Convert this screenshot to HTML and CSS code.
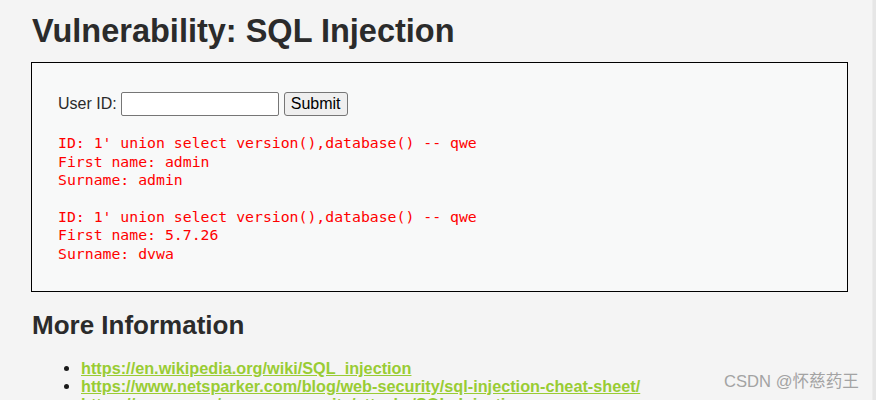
FILE: index.html
```html
<!DOCTYPE html>
<html lang="en">
<head>
<meta charset="utf-8">
<title>Vulnerability: SQL Injection</title>
<link rel="stylesheet" href="styles.css">
</head>
<body>
<div class="page">
  <div class="main">
    <h1 class="title">Vulnerability: SQL Injection</h1>
    <div class="code-area">
      <form class="form-row" onsubmit="return false">
        <label class="label" for="uid">User ID:</label>
        <input class="field" id="uid" type="text" name="id">
        <button class="btn" type="submit">Submit</button>
      </form>
      <pre class="result">ID: 1' union select version(),database() -- qwe
First name: admin
Surname: admin</pre>
      <pre class="result">ID: 1' union select version(),database() -- qwe
First name: 5.7.26
Surname: dvwa</pre>
    </div>
    <h2 class="subtitle">More Information</h2>
    <ul class="links">
      <li><a href="#">https://en.wikipedia.org/wiki/SQL_injection</a></li>
      <li><a href="#">https://www.netsparker.com/blog/web-security/sql-injection-cheat-sheet/</a></li>
      <li><a href="#">https://owasp.org/www-community/attacks/SQL_Injection</a></li>
    </ul>
  </div>
  <div class="scroll-edge"></div>
</div>
<div class="watermark">CSDN @怀慈药王</div>
</body>
</html>
```

FILE: styles.css
```css
html, body {
  margin: 0;
  padding: 0;
  height: 100%;
  overflow: hidden;
}
body {
  background: #f4f4f4;
  font-family: "Liberation Sans", Arial, sans-serif;
  color: #2b2b2b;
}
.page {
  display: flex;
  height: 100%;
}
.main {
  flex: 1;
  padding: 0 24px 0 31px;
}
.scroll-edge {
  width: 3px;
  background: #e6e6e6;
  border-left: 1px solid #ececec;
}
.title {
  margin: 13px 0 12px 1px;
  font-size: 32.5px;
  line-height: 37px;
  font-weight: bold;
  color: #2b2b2b;
}
.code-area {
  border: 1px solid #000;
  background: #f8f9f9;
  padding: 29px 26px 28px 26px;
}
.form-row {
  display: flex;
  align-items: center;
  margin: 0;
  height: 24px;
}
.label {
  font-size: 16px;
  color: #2b2b2b;
  margin-right: 4px;
}
.field {
  box-sizing: border-box;
  width: 158px;
  height: 24px;
  margin: 0;
  border: 1px solid #767676;
  border-radius: 2px;
  background: #fff;
}
.btn {
  box-sizing: border-box;
  width: 64px;
  height: 24px;
  margin: 0 0 0 5px;
  padding: 0;
  border: 1px solid #767676;
  border-radius: 3px;
  background: #efefef;
  font-family: "Liberation Sans", Arial, sans-serif;
  font-size: 16px;
  color: #000;
}
.result {
  margin: 18px 0 0 0;
  font-family: "DejaVu Sans Mono", monospace;
  font-size: 14.8px;
  line-height: 18.5px;
  color: #ff0000;
  white-space: pre;
}
.subtitle {
  margin: 18px 0 19px 1px;
  font-size: 26px;
  line-height: 30px;
  font-weight: bold;
  color: #2b2b2b;
}
.links {
  margin: 0;
  padding-left: 50px;
  font-size: 16.25px;
  line-height: 18px;
  font-weight: bold;
}
.links a {
  color: #99cc33;
  text-decoration: underline;
}
.links li::marker {
  color: #1a1a1a;
}
.watermark {
  position: absolute;
  left: 724px;
  top: 372px;
  font-family: "Liberation Sans", Arial, "Noto Sans CJK SC", sans-serif;
  font-size: 16.6px;
  line-height: 20px;
  color: #a3a3a3;
  white-space: nowrap;
}
```
